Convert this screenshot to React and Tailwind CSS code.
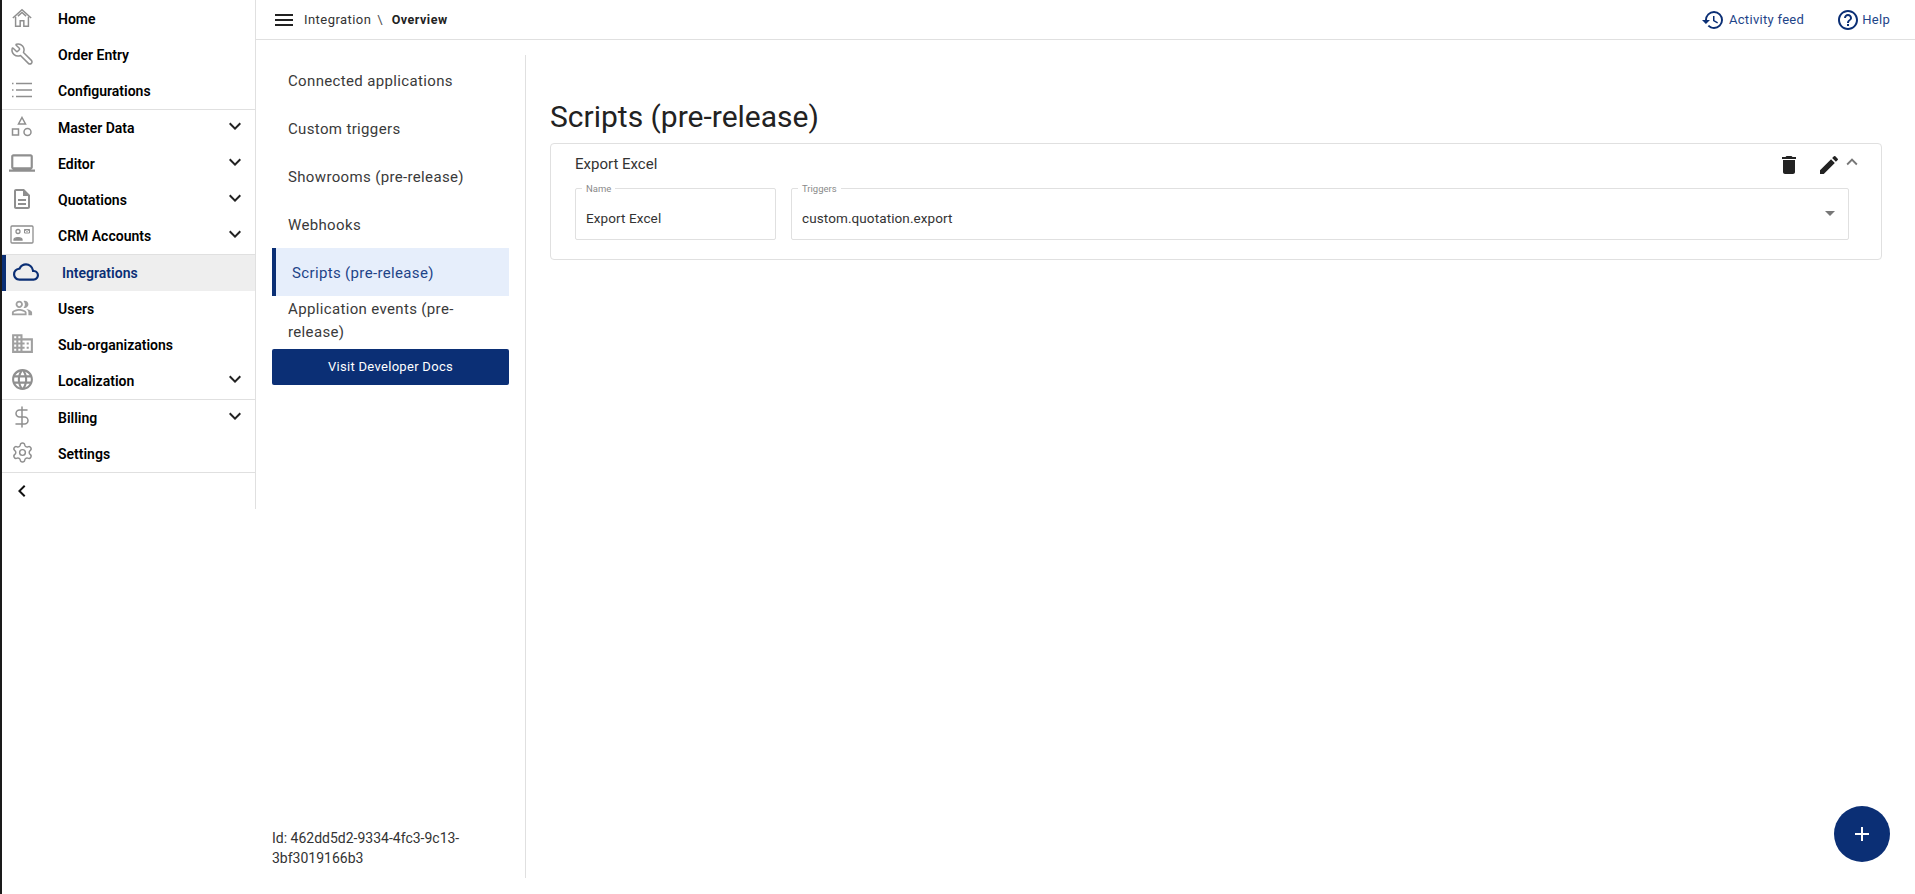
import {
  MdAdd,
  MdArrowDropDown,
  MdChevronLeft,
  MdDelete,
  MdEdit,
  MdExpandLess,
  MdExpandMore,
  MdHelpOutline,
  MdHistory,
  MdMenu,
  MdOutlineCloud,
  MdOutlineDescription,
  MdOutlineLanguage,
  MdOutlineLaptop,
  MdOutlinePeopleAlt,
  MdBusiness,
} from "react-icons/md";
import { Settings, DollarSign, Wrench } from "lucide-react";

const HomeIcon = () => (
  <svg width="22" height="22" viewBox="0 0 24 24" fill="none" stroke="#8f8f8f" strokeWidth="1.6">
    <path d="M2 12 12 3l10 9M5 10.5V21h5v-6h4v6h5V10.5" />
    <path d="M7.5 10 12 6l4.500 4" />
  </svg>
);

const ListIcon = () => (
  <svg width="22" height="18" viewBox="0 0 22 18" fill="none" stroke="#8f8f8f" strokeWidth="1.3">
    <path d="M5 2.500h16M5 9h16M5 15.500h16M1 2.500h1.500M1 9h1.500M1 15.500h1.500" />
  </svg>
);

const ShapesIcon = () => (
  <svg width="22" height="22" viewBox="0 0 22 22" fill="none" stroke="#8f8f8f" strokeWidth="1.500">
    <path d="M11 1.500 14.500 8h-7z" />
    <rect x="1.500" y="13" width="6" height="6" />
    <circle cx="16.500" cy="16" r="3.500" />
  </svg>
);

const ContactIcon = () => (
  <svg width="24" height="19" viewBox="0 0 24 19" fill="none" stroke="#8f8f8f" strokeWidth="1.300">
    <rect x="1" y="1" width="22" height="17" rx="1" />
    <circle cx="8" cy="6.500" r="2" />
    <path d="M4 14.500c0-2.500 8-2.500 8 0v.5H4z" fill="#8f8f8f" />
    <path d="M14.500 4.500h5v3.500h-5zM14.500 4.500l2.500 2 2.500-2" strokeWidth="1" />
  </svg>
);

const navGroups = [
  [
    { label: "Home", icon: <HomeIcon /> },
    { label: "Order Entry", icon: <Wrench size={24} strokeWidth={1.500} color="#8f8f8f" className="-scale-x-100" /> },
    { label: "Configurations", icon: <ListIcon /> },
  ],
  [
    { label: "Master Data", icon: <ShapesIcon />, more: true },
    { label: "Editor", icon: <MdOutlineLaptop size={26} color="#8f8f8f" />, more: true },
    { label: "Quotations", icon: <MdOutlineDescription size={24} color="#8f8f8f" />, more: true },
    { label: "CRM Accounts", icon: <ContactIcon />, more: true },
  ],
  [
    { label: "Integrations", icon: <MdOutlineCloud size={26} color="#0b2f75" />, active: true },
    { label: "Users", icon: <MdOutlinePeopleAlt size={22} color="#a0a0a0" /> },
    { label: "Sub-organizations", icon: <MdBusiness size={25} color="#a0a0a0" /> },
    { label: "Localization", icon: <MdOutlineLanguage size={25} color="#8f8f8f" />, more: true },
  ],
  [
    { label: "Billing", icon: <DollarSign size={24} strokeWidth={1.500} color="#8f8f8f" />, more: true },
    { label: "Settings", icon: <Settings size={23} strokeWidth={1.500} color="#8f8f8f" /> },
  ],
];

const subNav = ["Connected applications", "Custom triggers", "Showrooms (pre-release)", "Webhooks"];

const NavRow = ({ item }) => (
  <div
    className={`flex h-9 items-center ${
      item.active ? "border-l-4 border-[#0b2f75] bg-[#eeeeee] text-[#0b2f75]" : "text-black"
    }`}
  >
    <div className="mr-4 -mt-[3px] flex w-10 shrink-0 items-center justify-center">{item.icon}</div>
    <span className="flex-1 text-[14px] font-semibold">{item.label}</span>
    {item.more && <MdExpandMore size={24} className="mr-[8px] -mt-[4px] text-[#222]" />}
  </div>
);

const Sidebar = () => (
  <aside className="flex h-[509px] w-[254px] shrink-0 flex-col border-r border-[#e0e0e0] pt-[1px] font-['Roboto',sans-serif]">
    {navGroups.map((group) => (
      <div key={group[0].label} className="border-b border-[#e0e0e0]">
        {group.map((item) => (
          <NavRow key={item.label} item={item} />
        ))}
      </div>
    ))}
    <div className="flex h-9 items-center pl-[8px]">
      <MdChevronLeft size={24} className="text-[#111]" />
    </div>
  </aside>
);

const TopBar = () => (
  <header className="flex h-[40px] shrink-0 items-center border-b border-[#e0e0e0] pl-[16px] pr-[25px]">
    <MdMenu size={24} className="text-[#222]" />
    <span className="ml-[8px] text-[13px] tracking-[0.45px] text-[#333]">Integration</span>
    <span className="ml-[6px] text-[13px] text-[#555]">\</span>
    <span className="ml-[9px] mt-[1px] text-[12.500px] font-bold tracking-[0.5px] text-[#222]">Overview</span>
    <div className="ml-auto flex items-center text-[13px] tracking-[0.3px] text-[#1e4488]">
      <MdHistory size={24} className="text-[#0b2f75]" />
      <span className="ml-[4px]">Activity feed</span>
      <MdHelpOutline size={24} className="ml-[32px] text-[#0b2f75]" />
      <span className="ml-[2px]">Help</span>
    </div>
  </header>
);

const SubNav = () => (
  <div className="mt-[15px] flex w-[270px] shrink-0 flex-col border-r border-[#e0e0e0] pl-[16px] pr-4 pt-[1px] text-[15px] tracking-[0.35px] text-[#3a3a3a]">
    {subNav.map((label) => (
      <div key={label} className="flex h-12 items-center pl-4 pt-[2px]">
        {label}
      </div>
    ))}
    <div className="flex h-12 items-center border-l-4 border-[#0b2f75] bg-[#e6eefb] pl-[16px] pt-[2px] text-[#1e4488]">
      Scripts (pre-release)
    </div>
    <div className="mt-[2px] pl-4 leading-[23px]">Application events (pre-release)</div>
    <button
      type="button"
      className="mt-[5px] h-9 rounded-[2px] bg-[#0b2f75] text-[13px] tracking-[0.3px] text-white"
    >
      Visit Developer Docs
    </button>
    <div className="mt-auto mb-[10px] text-[14px] leading-5 tracking-normal text-[#333]">
      Id: 462dd5d2-9334-4fc3-9c13-3bf3019166b3
    </div>
  </div>
);

const OutlinedField = ({ label, value, className, children }) => (
  <div className={`relative flex h-[52px] items-center rounded-[2px] border border-[#e0e0e0] pl-[10px] text-[13.500px] text-[#333] ${className}`}>
    <span className="absolute -top-[6px] left-[6px] bg-white px-[4px] text-[9.500px] leading-[12px] text-[#8a8a8a]">
      {label}
    </span>
    <span className="mt-[8px] tracking-[0.1px]">{value}</span>
    {children}
  </div>
);

const ScriptCard = () => (
  <div className="relative mt-[8px] mr-[33px] h-[117px] rounded-[4px] border border-[#e0e0e0] px-[24px]">
    <div className="flex h-[44px] items-start pt-[9px] text-[15px] text-[#333]">
      Export Excel
      <div className="ml-auto -mr-[6px] flex items-start">
        <MdDelete size={24} className="text-[#222]" />
        <MdEdit size={24} className="ml-[16px] text-[#222]" />
        <MdExpandLess size={22} className="-mt-[2px] text-[#777]" />
      </div>
    </div>
    <div className="flex gap-[15px] pr-[8px]">
      <OutlinedField label="Name" value="Export Excel" className="w-[201px] shrink-0" />
      <OutlinedField label="Triggers" value="custom.quotation.export" className="flex-1">
        <MdArrowDropDown size={24} className="absolute right-[6px] top-[12px] text-[#777]" />
      </OutlinedField>
    </div>
  </div>
);

const App = () => (
  <div className="relative flex h-[894px] w-[1915px] overflow-hidden border-l-2 border-[#1a1a1a] bg-white font-['Roboto',sans-serif]">
    <Sidebar />
    <main className="flex min-w-0 flex-1 flex-col">
      <TopBar />
      <div className="flex h-[838px]">
        <SubNav />
        <section className="min-w-0 flex-1 pl-[24px] pt-[59px]">
          <h1 className="text-[30px] leading-[36px] text-[#222]">Scripts (pre-release)</h1>
          <ScriptCard />
        </section>
      </div>
    </main>
    <button
      type="button"
      className="absolute left-[1832px] top-[806px] flex h-[56px] w-[56px] items-center justify-center rounded-full bg-[#0b2f75] text-white"
    >
      <MdAdd size={24} />
    </button>
  </div>
);

export default App;
